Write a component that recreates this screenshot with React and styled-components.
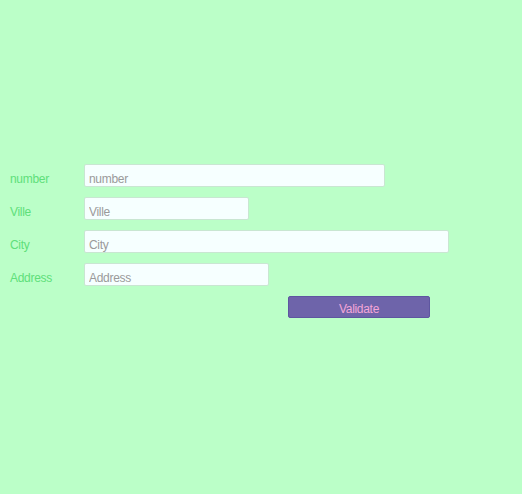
import React from 'react';
import styled, { createGlobalStyle } from 'styled-components';

const GlobalStyle = createGlobalStyle`
  html, body {
    margin: 0;
    padding: 0;
    background: #bbffc8;
  }
`;

const Page = styled.div`
  width: 522px;
  height: 494px;
  box-sizing: border-box;
  padding: 164px 0 0 10px;
  font-family: "Liberation Sans", Arial, sans-serif;
  font-size: 12px;
  letter-spacing: -0.3px;
`;

const Form = styled.form`
  display: flex;
  flex-direction: column;
  gap: 10px;
`;

const Row = styled.div`
  display: flex;
  align-items: baseline;
`;

const Label = styled.label`
  width: 74px;
  color: #5ee07a;
`;

const Input = styled.input`
  box-sizing: border-box;
  width: ${p => p.$w}px;
  height: 23px;
  margin: 0;
  padding: 6px 4px 0;
  border: 1px solid #c9e6d2;
  border-radius: 2px;
  background: #f6ffff;
  font-family: inherit;
  font-size: 12px;
  letter-spacing: inherit;
  color: #777;
  outline: none;

  &::placeholder {
    color: #9a9a9a;
  }
`;

const Button = styled.button`
  align-self: flex-start;
  margin-left: 278px;
  width: 142px;
  height: 22px;
  border: 1px solid #5e56a0;
  border-radius: 2px;
  background: #6e64aa;
  color: #f4a6d8;
  font-family: inherit;
  font-size: 12px;
  letter-spacing: inherit;
  padding: 3px 0 0;
`;

const fields = [
  { name: 'number', w: 301 },
  { name: 'Ville', w: 165 },
  { name: 'City', w: 365 },
  { name: 'Address', w: 185 },
];

export default function App() {
  return (
    <>
      <GlobalStyle />
      <Page>
        <Form onSubmit={e => e.preventDefault()}>
          {fields.map(f => (
            <Row key={f.name}>
              <Label>{f.name}</Label>
              <Input $w={f.w} placeholder={f.name} />
            </Row>
          ))}
          <Button type="submit">Validate</Button>
        </Form>
      </Page>
    </>
  );
}
